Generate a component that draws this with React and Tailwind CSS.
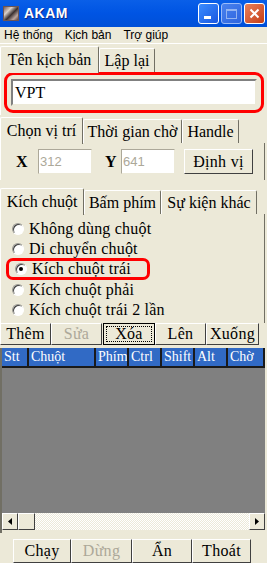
import React from "react";

const serif = { fontFamily: '"Liberation Serif", "DejaVu Serif", serif' };
const sans = { fontFamily: '"Liberation Sans", Arial, sans-serif' };

function Tab({ label, active, w }) {
  return (
    <div
      className={`flex items-center justify-center border-t border-l border-r border-t-white border-l-white border-r-[#716f64] bg-[#ece9d8] rounded-t-[2px] ${
        active ? "h-[27px] relative z-10 -mb-px" : "h-[24px]"
      }`}
      style={{ width: w }}
    >
      <span className="text-[16px] leading-none text-black whitespace-nowrap">{label}</span>
    </div>
  );
}

function Radio({ label, checked }) {
  return (
    <div className="flex items-center h-[20px] pl-[11px] gap-[5px]">
      <div className="w-[12px] h-[12px] rounded-full bg-white border border-[#9b9a93] border-b-white border-r-white flex items-center justify-center shadow-[inset_1px_1px_0_#404040]">
        {checked && <div className="w-[4px] h-[4px] rounded-full bg-black" />}
      </div>
      <span className="text-[16px] leading-none text-black tracking-[0.2px]">{label}</span>
    </div>
  );
}

function Btn({ label, w, disabled, focused, h = "h-[22px]" }) {
  return (
    <div
      className={`${h} flex items-stretch bg-[#ece9d8] border ${
        focused ? "border-black" : "border-t-white border-l-white border-r-[#404040] border-b-[#404040]"
      }`}
      style={{ width: w }}
    >
      <div
        className={`flex-1 flex items-center justify-center ${
          focused ? "border border-dotted border-black m-[2px]" : ""
        }`}
      >
        <span className={`text-[16px] leading-none tracking-[0.3px] ${disabled ? "text-[#aca899]" : "text-black"}`}>{label}</span>
      </div>
    </div>
  );
}

export default function App() {
  const cols = [
    ["Stt", 27],
    ["Chuột", 67],
    ["Phím", 33],
    ["Ctrl", 33],
    ["Shift", 33],
    ["Alt", 33],
    ["Chờ", 37],
  ];
  return (
    <div className="w-[267px] h-[563px] bg-[#ece9d8] overflow-hidden flex flex-col" style={serif}>
      {/* Title bar */}
      <div className="h-[27px] flex items-center bg-gradient-to-b from-[#0a5fe8] via-[#0054e3] to-[#0050d8] pl-[3px] pr-[2px]">
        <div className="w-[16px] h-[15px] bg-[linear-gradient(135deg,#7a5c5c_0%,#d9d0c8_30%,#3a3030_55%,#bba7a0_80%,#5b4545_100%)] border border-[#6b5555]" />
        <span className="ml-[5px] text-white font-bold text-[14px] tracking-[0.5px]" style={{ ...sans, textShadow: "1px 1px 0 #0a2a8a" }}>
          AKAM
        </span>
        <div className="ml-auto flex gap-[2px]">
          <div className="w-[21px] h-[21px] rounded-[3px] border border-white bg-gradient-to-br from-[#3c8cff] to-[#1a56e0] flex items-end pl-[5px] pb-[4px]">
            <div className="w-[7px] h-[3px] bg-white" />
          </div>
          <div className="w-[21px] h-[21px] rounded-[3px] border border-[#c0d4ff] bg-gradient-to-br from-[#5b8cf0] to-[#3a6ae0] opacity-80 flex items-center justify-center">
            <div className="w-[11px] h-[10px] border border-[#b8ccf5] border-t-[2px]" />
          </div>
          <div className="w-[21px] h-[21px] rounded-[3px] border border-white bg-gradient-to-br from-[#e8805a] to-[#c43c12] flex items-center justify-center">
            <svg width="11" height="11" viewBox="0 0 11 11">
              <path d="M1.5 1.5 L9.5 9.5 M9.5 1.5 L1.5 9.5" stroke="white" strokeWidth="2" />
            </svg>
          </div>
        </div>
      </div>
      {/* Menu */}
      <div className="h-[17px] flex items-center gap-[12px] pl-[4px] text-[12px] text-black border-b border-b-white" style={sans}>
        <span>Hệ thống</span>
        <span>Kịch bản</span>
        <span>Trợ giúp</span>
      </div>
      <div className="h-[2px]" />

      {/* Tab group 1 */}
      <div className="flex items-end">
        <Tab label="Tên kịch bản" active w={99} />
        <Tab label="Lập lại" w={56} />
      </div>
      <div className="h-[43px] border-l border-l-white px-[3px]">
        <div className="h-[41px] border-[3px] border-[#ff0000] rounded-[9px] px-[4px] pt-[4px]">
          <div className="h-[27px] bg-white border-2 border-t-[#808080] border-l-[#808080] border-r-[#ece9d8] border-b-[#ece9d8] flex items-center pl-[2px]">
            <span className="text-[16px] leading-none text-black">VPT</span>
          </div>
        </div>
      </div>
      <div className="h-[2px]" />

      {/* Tab group 2 */}
      <div className="flex items-end">
        <Tab label="Chọn vị trí" active w={83} />
        <Tab label="Thời gian chờ" w={99} />
        <Tab label="Handle" w={57} />
      </div>
      <div className="h-[37px] w-[265px] border-l border-r border-l-white border-r-[#716f64] flex items-center">
        <span className="ml-[15px] w-[22px] text-[16px] font-bold leading-none">X</span>
        <div className="w-[54px] h-[25px] bg-white border border-t-[#aca899] border-l-[#aca899] border-r-[#ece9d8] border-b-[#ece9d8] flex items-center pl-[1px]">
          <span className="text-[13px] text-[#aca899]" style={sans}>312</span>
        </div>
        <span className="ml-[13px] w-[16px] text-[16px] font-bold leading-none">Y</span>
        <div className="w-[54px] h-[25px] bg-white border border-t-[#aca899] border-l-[#aca899] border-r-[#ece9d8] border-b-[#ece9d8] flex items-center pl-[1px]">
          <span className="text-[13px] text-[#aca899]" style={sans}>641</span>
        </div>
        <div className="ml-[9px]">
          <Btn label="Định vị" w={69} h="h-[25px]" />
        </div>
      </div>
      <div className="h-[8px]" />

      {/* Tab group 3 */}
      <div className="flex items-end">
        <Tab label="Kích chuột" active w={84} />
        <Tab label="Bấm phím" w={77} />
        <Tab label="Sự kiện khác" w={96} />
      </div>
      <div className="h-[109px] w-[265px] border-l border-r border-l-white border-r-[#716f64] pt-[5px]">
        <Radio label="Không dùng chuột" />
        <Radio label="Di chuyển chuột" />
        <div className="ml-[5px] w-[144px] h-[22px] border-[3px] border-[#ff0000] rounded-[7px] flex items-center -mt-[1px]">
          <div className="-ml-[5px]">
            <Radio label="Kích chuột trái" checked />
          </div>
        </div>
        <Radio label="Kích chuột phải" />
        <Radio label="Kích chuột trái 2 lần" />
      </div>

      {/* Buttons row */}
      <div className="flex h-[23px] items-start">
        <Btn label="Thêm" w={51} />
        <Btn label="Sửa" w={51} disabled />
        <div className="ml-[1px]">
          <Btn label="Xóa" w={52} focused />
        </div>
        <Btn label="Lên" w={51} />
        <Btn label="Xuống" w={53} />
      </div>
      <div className="h-[2px]" />

      {/* Table */}
      <div className="w-[265px] flex-1 flex flex-col border-l-2 border-l-[#716f64] min-h-0">
        <div className="h-[20px] bg-[#316ac5] flex border-b-2 border-b-[#1a1a1a]">
          {cols.map(([t, w], i) => (
            <div
              key={t}
              className="h-full flex items-center pl-[2px] border-r-2 border-r-[#1a1a1a] text-white text-[14px] leading-none overflow-hidden whitespace-nowrap"
              style={{ width: w }}
            >
              {t}
            </div>
          ))}
        </div>
        <div className="h-[145px] bg-[#808080]" />
        <div className="h-[17px] flex bg-[repeating-conic-gradient(#ffffff_0%_25%,#ece9d8_0%_50%)] [background-size:2px_2px]">
          <div className="w-[16px] h-full bg-[#ece9d8] border border-t-white border-l-white border-r-[#404040] border-b-[#404040] flex items-center justify-center">
            <svg width="4" height="7" viewBox="0 0 4 7"><path d="M4 0 L0 3.5 L4 7 Z" fill="black" /></svg>
          </div>
          <div className="w-[17px] h-full bg-[#ece9d8] border border-t-white border-l-white border-r-[#404040] border-b-[#404040]" />
          <div className="flex-1" />
          <div className="w-[16px] h-full bg-[#ece9d8] border border-t-white border-l-white border-r-[#404040] border-b-[#404040] flex items-center justify-center">
            <svg width="4" height="7" viewBox="0 0 4 7"><path d="M0 0 L4 3.5 L0 7 Z" fill="black" /></svg>
          </div>
        </div>
        <div className="flex-1 bg-[#ece9d8]" />
      </div>
      <div className="h-[6px]" />
      <div className="flex pl-[13px] h-[24px]">
        <Btn label="Chạy" w={58} h="h-[24px]" />
        <Btn label="Dừng" w={61} disabled h="h-[24px]" />
        <Btn label="Ẩn" w={60} h="h-[24px]" />
        <Btn label="Thoát" w={59} h="h-[24px]" />
      </div>
    </div>
  );
}
